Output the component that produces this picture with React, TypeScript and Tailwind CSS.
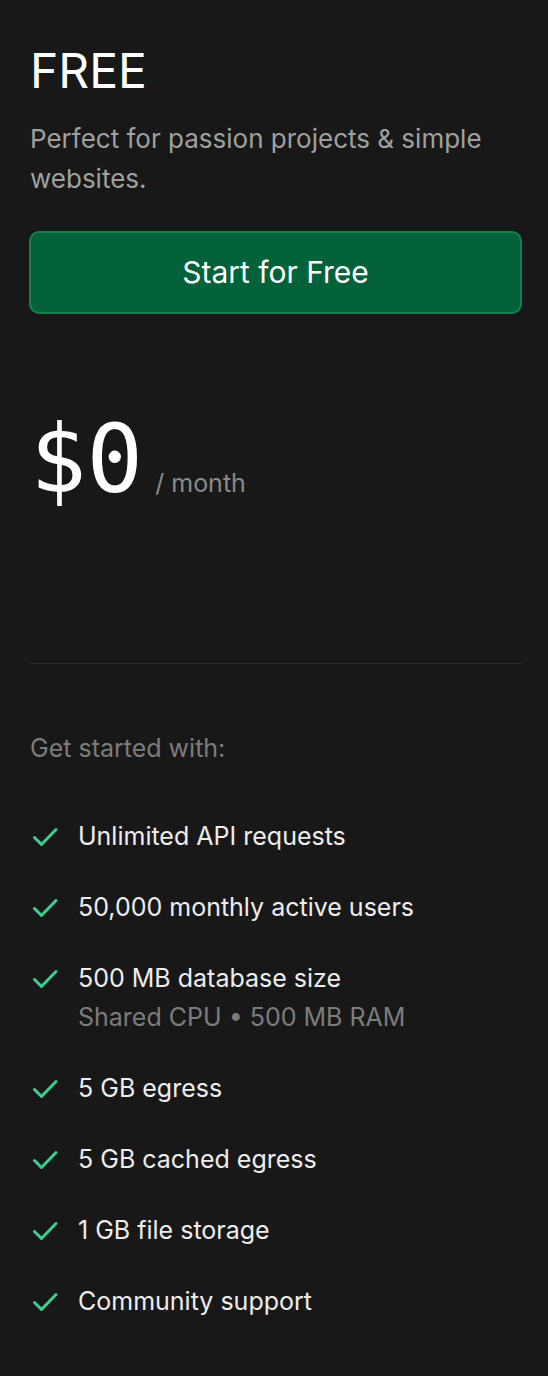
import React from 'react';

type Feature = { label: string; sub?: string };

const features: Feature[] = [
  { label: 'Unlimited API requests' },
  { label: '50,000 monthly active users' },
  { label: '500 MB database size', sub: 'Shared CPU • 500 MB RAM' },
  { label: '5 GB egress' },
  { label: '5 GB cached egress' },
  { label: '1 GB file storage' },
  { label: 'Community support' },
];

const CheckMark = () => (
  <svg viewBox="0 0 26 20" className="mt-[7px] ml-[2px] w-[26px] h-[20px] shrink-0" fill="none">
    <path d="M2.5 10.5 9.5 17.5 24 2.5" stroke="#3ecf8e" strokeWidth="3" strokeLinecap="round" strokeLinejoin="round" />
  </svg>
);

const App: React.FC = () => {
  return (
    <div
      className="min-h-screen bg-[#181818] pl-[30px] pr-[26px] pt-[47px] pb-10 text-[#ededed]"
      style={{ fontFamily: 'Inter, "Noto Sans", sans-serif' }}
    >
      <h1 className="text-[48px] leading-[48px] font-normal text-white">FREE</h1>
      <p className="mt-6 text-[26px] leading-[40px] text-[#a0a0a0]">
        Perfect for passion projects &amp; simple websites.
      </p>

      <button className="mt-[32px] -ml-px w-[calc(100%+1px)] h-[83px] rounded-[10px] bg-[#04623a] border-2 border-[#198049] text-[30px] text-white">
        Start for Free
      </button>

      <div className="mt-[99px] flex items-baseline gap-3">
        <span
          className="text-[94px] leading-none text-white slashed-zero"
          style={{ fontFamily: '"DejaVu Sans Mono", monospace' }}
        >
          $0
        </span>
        <span className="text-[25px] text-[#8a8a8a]">/ month</span>
      </div>

      <div className="mt-[156px] h-px bg-[#2e2e2e]" />

      <p className="mt-[66px] text-[25px] text-[#7c7c7c]">Get started with:</p>

      <ul className="mt-[52px] flex flex-col gap-[39px]">
        {features.map((f) => (
          <li key={f.label} className="flex gap-[20px]">
            <CheckMark />
            <div className="text-[25px] leading-[32px]">
              <div>{f.label}</div>
              {f.sub && <div className="mt-[7px] text-[#7c7c7c]">{f.sub}</div>}
            </div>
          </li>
        ))}
      </ul>
    </div>
  );
};

export default App;
